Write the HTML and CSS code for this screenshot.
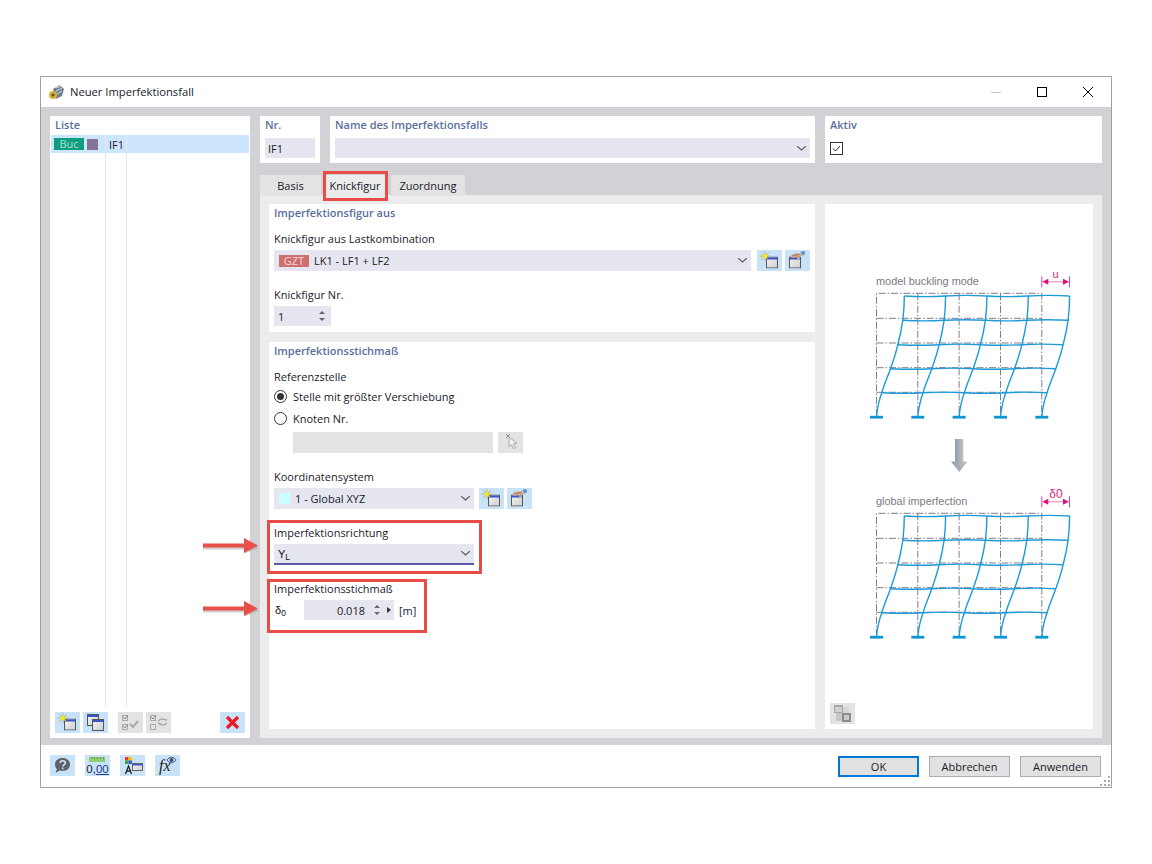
FILE: index.html
```html
<!DOCTYPE html>
<html lang="de">
<head>
<meta charset="utf-8">
<title>Neuer Imperfektionsfall</title>
<link rel="stylesheet" href="styles.css">
</head>
<body>
<svg class="defs" width="0" height="0" aria-hidden="true">
  <defs>
    <linearGradient id="winfill" x1="0" y1="0" x2="1" y2="1"><stop offset="0" stop-color="#f4f4f4"/><stop offset="1" stop-color="#cfcfcf"/></linearGradient>
    <linearGradient id="arrowfill" x1="0" y1="0" x2="1" y2="0"><stop offset="0" stop-color="#8f9bb8"/><stop offset="1" stop-color="#c2c2bc"/></linearGradient>
    <symbol id="i-win" viewBox="0 0 12 12">
      <rect x=".5" y=".5" width="11" height="11" fill="url(#winfill)" stroke="#555"/>
      <rect x="1" y="1" width="10" height="2" fill="#3a55d0"/>
    </symbol>
    <symbol id="i-star" viewBox="0 0 12 12">
      <path d="M6 0v12M0 6h12M1.500 1.500l9 9M10.500 1.500l-9 9" stroke="#a8a890" stroke-width=".9"/>
      <path d="M6 2.500l1 2.500 2.500.2-1.900 1.600.7 2.500L6 7.900 3.700 9.300l.7-2.500L2.500 5.200 5 5z" fill="#ffee00"/>
    </symbol>
    <symbol id="i-new" viewBox="0 0 25 21">
      <use href="#i-win" x="9" y="6.500" width="12" height="12"/>
      <use href="#i-star" x="2.500" y=".5" width="11" height="11"/>
    </symbol>
    <symbol id="i-edit" viewBox="0 0 25 21">
      <use href="#i-win" x="4" y="6.500" width="12" height="12"/>
      <path d="M15.500 1.800l4-.8.500 3.500-3.500 1.200z" fill="#5c8fd0"/>
      <path d="M5 6.500C6.500 4 9.500 3 12 3.300l5 .2.500 2-2.500.7-.5 3.500-2 .5-.5-3.200-3.500.4-1 .5z" fill="#d2ab92"/>
      <path d="M7 6l5-1M10 4.800l5-.3M12.800 7l1.600-.6" stroke="#8d6e5e" stroke-width=".6" fill="none"/>
    </symbol>
    <symbol id="i-copy" viewBox="0 0 25 21">
      <use href="#i-win" x="4" y="2" width="12" height="12"/>
      <use href="#i-win" x="9" y="7" width="12" height="12"/>
    </symbol>
    <symbol id="i-checks" viewBox="0 0 25 21">
      <g fill="none" stroke="#a9a9a9">
        <rect x="4.500" y="3.500" width="5" height="5"/><rect x="4.500" y="12.500" width="5" height="5"/>
        <path d="M5 5l2 2 3-4M5 14l2 2 3-4" stroke="#8a8a8a"/>
        <path d="M12 12l3 3 5-6" stroke-width="2"/>
      </g>
    </symbol>
    <symbol id="i-swap" viewBox="0 0 25 21">
      <g fill="none" stroke="#a9a9a9">
        <rect x="4.500" y="3.500" width="5" height="5"/><rect x="4.500" y="12.500" width="5" height="5"/>
        <path d="M5 5l2 2 3-4" stroke="#8a8a8a"/>
        <path d="M12 9c3-3 5-2 9-1M21 11c-3 3-5 2-9 0" stroke-width="1.500"/>
      </g>
    </symbol>
    <symbol id="i-del" viewBox="0 0 25 21">
      <path d="M7 5l11 11M18 5L7 16" stroke="#ec1c24" stroke-width="3.200" fill="none"/>
    </symbol>
    <symbol id="i-help" viewBox="0 0 25 21">
      <path d="M12.500 3c4.600 0 7.500 2.800 7.500 6.500S17 16 12.500 16c-1 0-2 0-2.800-.4L5.500 18l1.300-4C5.600 12.800 5 11.300 5 9.500 5 5.800 8 3 12.500 3z" fill="#5c636b"/>
      <path d="M10 8c.3-3 5.300-3 5.300 0 0 2-2.500 1.800-2.500 3.500M12.800 12.500v1.700" fill="none" stroke="#d6e6f5" stroke-width="1.500"/>
    </symbol>
    <symbol id="i-ruler" viewBox="0 0 25 21">
      <rect x="4" y="2" width="16" height="5" fill="#8fce74"/>
      <path d="M6.500 2v2M9.500 2v2M12.500 2v2M15.500 2v2M18.500 2v2" stroke="#5e9c48"/>
    </symbol>
    <symbol id="i-colors" viewBox="0 0 25 21">
      <rect x="5" y="2" width="3.500" height="3.500" fill="#e33"/><rect x="8.500" y="2" width="3.500" height="3.500" fill="#eec900"/>
      <rect x="5" y="5.500" width="3.500" height="3.500" fill="#3aa845"/><rect x="8.500" y="5.500" width="3.500" height="3.500" fill="#3b5fd0"/>
      <path d="M5.500 19l3-8 3 8M7 16h3" stroke="#222" stroke-width="1.300" fill="none"/>
      <rect x="12.500" y="8.500" width="10" height="7" fill="url(#winfill)" stroke="#666"/>
      <rect x="13" y="9" width="9" height="1.500" fill="#3a55d0"/>
    </symbol>
    <symbol id="i-eye" viewBox="0 0 25 21">
      <path d="M12 5c2-3.500 7-3.500 9 0-2 3.500-7 3.500-9 0z" fill="#dfe8f2" stroke="#4a5a8c"/>
      <circle cx="16.500" cy="5" r="2" fill="#3a4a86"/>
    </symbol>
    <symbol id="i-pick" viewBox="0 0 25 21">
      <path d="M8 2l4 4M12 2L8 6" stroke="#8a8a8a"/>
      <path d="M11 5l0 10 2.500-2.300 2 4 2-1-2-3.800 3.500-.4z" fill="#f0f0f0" stroke="#aaa"/>
    </symbol>
    <symbol id="i-views" viewBox="0 0 25 21">
      <rect x="4" y="2" width="9" height="8" fill="#a8a8a8"/><rect x="5" y="4" width="7" height="5" fill="#cfcfcf"/>
      <rect x="12" y="10" width="9" height="9" fill="#8c8c8c"/><rect x="14" y="12" width="5" height="5" fill="#c8c8c8"/>
      <rect x="6" y="10" width="6" height="8" fill="#c6c6c6"/><rect x="13" y="4" width="6" height="6" fill="#d6d6d6"/>
    </symbol>
    <path id="chev" d="M0 0l4.500 4L9 0" fill="none" stroke="#555" stroke-width="1.100"/>
    <g id="frame">
      <g fill="none" stroke="#6e6e80" stroke-width=".9" stroke-dasharray="7 2 1.500 2">
        <path d="M0 123V0h165.300v123"/>
        <path d="M41.300 0v123M82.600 0v123M124 0v123"/>
        <path d="M0 25h165.300M0 49.700h165.300M0 74.400h165.300M0 99h165.300"/>
      </g>
      <g fill="none" stroke="#1e9ad8" stroke-width="1.400">
        <path id="col" d="M0 123.700C.8 114 2.500 107 5.300 99.400 8 90 11 84 14 75.400 17 67 19.500 60 21.300 51.400 23.500 43 25 36 26.300 27 27.300 19 27.800 10 27.800 2.700"/>
        <use href="#col" x="41.300"/><use href="#col" x="82.600"/><use href="#col" x="124"/><use href="#col" x="165.300"/>
        <path d="M27.800 2.700q20.700 1.200 41.300 0t41.300 0 41.300 0 41.300 0"/>
        <path d="M26.300 27q20.700 1.200 41.300 0t41.300 0 41.300 0 41.300 0"/>
        <path d="M21.300 51.400q20.700 1.200 41.300 0t41.300 0 41.300 0 41.300 0"/>
        <path d="M14 75.400q20.700 1.200 41.300 0t41.300 0 41.300 0 41.300 0"/>
        <path d="M5.300 99.400q20.700 1.200 41.300 0t41.300 0 41.300 0 41.300 0"/>
      </g>
      <g fill="#0c96d6">
        <rect x="-6.500" y="122.500" width="13" height="2.800"/><rect x="34.800" y="122.500" width="13" height="2.800"/><rect x="76.100" y="122.500" width="13" height="2.800"/><rect x="117.500" y="122.500" width="13" height="2.800"/><rect x="158.800" y="122.500" width="13" height="2.800"/>
      </g>
      <g stroke="#e0107a" fill="#e0107a">
        <path d="M165.300 -17v11M193 -17v11" stroke-width=".8" fill="none"/>
        <path d="M170 -11.500h18" stroke="#f080b8" stroke-width="1"/>
        <path d="M165.800 -11.500l6-3v6zM192.500 -11.500l-6-3v6z" stroke="none"/>
      </g>
    </g>
  </defs>
</svg>

<main class="dialog">
  <header class="titlebar">
    <svg class="appicon" width="18" height="18" viewBox="0 0 18 18">
      <path d="M5 6l7-4 4 4-2 7-6 3z" fill="#6e7d90"/>
      <path d="M8 5l5-2M8 8l6-3M9 11l5-3" stroke="#d8dde4" fill="none"/>
      <circle cx="5" cy="12" r="4" fill="#d8b03c"/><circle cx="5" cy="12" r="1.500" fill="#5c4a10"/>
    </svg>
    <span class="title">Neuer Imperfektionsfall</span>
    <div class="winctl">
      <svg class="wc" width="46" height="12" viewBox="0 0 46 12"><path d="M18 6.500h10" stroke="#c8c8c8"/></svg>
      <svg class="wc" width="46" height="12" viewBox="0 0 46 12"><rect x="18.500" y="1.500" width="9" height="9" fill="none" stroke="#000"/></svg>
      <svg class="wc" width="46" height="12" viewBox="0 0 46 12"><path d="M18 1l10 10M28 1L18 11" stroke="#000" fill="none"/></svg>
    </div>
  </header>

  <div class="workarea">
    <aside class="listpanel">
      <div class="ptitle list-title">Liste</div>
      <div class="listrow">
        <span class="badge buc">Buc</span><span class="swatch"></span><span class="rowname">IF1</span>
      </div>
      <div class="listbody"><span class="rule one"></span><span class="rule two"></span></div>
      <div class="listtools">
        <button class="ib"><svg><use href="#i-new"/></svg></button>
        <button class="ib"><svg><use href="#i-copy"/></svg></button>
        <button class="ib off first-off"><svg><use href="#i-checks"/></svg></button>
        <button class="ib off"><svg><use href="#i-swap"/></svg></button>
        <button class="ib del"><svg><use href="#i-del"/></svg></button>
      </div>
    </aside>

    <section class="mainpane">
      <div class="toprow">
        <div class="topbox nr">
          <div class="ptitle">Nr.</div>
          <div class="inp nrinp">IF1</div>
        </div>
        <div class="topbox name">
          <div class="ptitle">Name des Imperfektionsfalls</div>
          <div class="inp sel"><svg class="chev" width="9" height="5"><use href="#chev"/></svg></div>
        </div>
        <div class="topbox aktiv">
          <div class="ptitle">Aktiv</div>
          <svg class="check" width="13" height="13" viewBox="0 0 13 13"><rect x=".5" y=".5" width="12" height="12" fill="#fff" stroke="#333"/><path d="M3 6.500l2.500 2.500L10 4" fill="none" stroke="#333"/></svg>
        </div>
      </div>

      <nav class="tabs">
        <div class="tab t-basis">Basis</div>
        <div class="tab t-knick active">Knickfigur<span class="hl hl-tab"></span></div>
        <div class="tab t-zuord">Zuordnung</div>
      </nav>

      <div class="tabbody">
        <div class="formcol">
          <div class="panel p1">
            <div class="ptitle">Imperfektionsfigur aus</div>
            <div class="lbl gap10">Knickfigur aus Lastkombination</div>
            <div class="ctlrow">
              <div class="inp sel w477"><span class="badge gzt">GZT</span><span>LK1 - LF1 + LF2</span><svg class="chev" width="9" height="5"><use href="#chev"/></svg></div>
              <button class="ib"><svg><use href="#i-new"/></svg></button>
              <button class="ib"><svg><use href="#i-edit"/></svg></button>
            </div>
            <div class="lbl gap16">Knickfigur Nr.</div>
            <div class="inp spin w57"><span>1</span><span class="updown"><i class="up"></i><i class="dn"></i></span></div>
          </div>

          <div class="panel p2">
            <div class="ptitle">Imperfektionsstichmaß</div>
            <div class="lbl gap10">Referenzstelle</div>
            <div class="radio"><span class="dot on"></span>Stelle mit größter Verschiebung</div>
            <div class="radio"><span class="dot"></span>Knoten Nr.</div>
            <div class="ctlrow indent">
              <div class="inp dis w200"></div>
              <button class="ib off"><svg><use href="#i-pick"/></svg></button>
            </div>
            <div class="lbl gap16">Koordinatensystem</div>
            <div class="ctlrow">
              <div class="inp sel w200"><span class="cs"></span><span>1 - Global XYZ</span><svg class="chev" width="9" height="5"><use href="#chev"/></svg></div>
              <button class="ib"><svg><use href="#i-new"/></svg></button>
              <button class="ib"><svg><use href="#i-edit"/></svg></button>
            </div>
            <div class="field gap16">
              <div class="lbl">Imperfektionsrichtung</div>
              <div class="ctlrow">
                <div class="inp sel w200 focus"><span class="sym">Y<sub>L</sub></span><svg class="chev" width="9" height="5"><use href="#chev"/></svg></div>
              </div>
              <span class="hl hl-dir"></span>
              <svg class="redarrow a1" width="60" height="16" viewBox="0 0 60 16"><path d="M1 7h42V2l14 6-14 6V10H1z" fill="#8a8a8a" opacity=".4" transform="translate(0 1.500)"/><path d="M1 5.500h41V0l14 7.500L42 15V9.500H1z" fill="#e8504a"/></svg>
            </div>
            <div class="field gap16">
              <div class="lbl">Imperfektionsstichmaß</div>
              <div class="ctlrow valrow">
                <span class="sym delta">δ<sub>0</sub></span>
                <div class="inp num"><span class="val">0.018</span><span class="updown"><i class="up"></i><i class="dn"></i></span><i class="rt"></i></div>
                <span class="unit">[m]</span>
              </div>
              <span class="hl hl-val"></span>
              <svg class="redarrow a2" width="60" height="16" viewBox="0 0 60 16"><path d="M1 7h42V2l14 6-14 6V10H1z" fill="#8a8a8a" opacity=".4" transform="translate(0 1.500)"/><path d="M1 5.500h41V0l14 7.500L42 15V9.500H1z" fill="#e8504a"/></svg>
            </div>
          </div>
        </div>

        <div class="preview">
          <svg class="diagram" width="268" height="470" viewBox="825 204 268 470">
            <text x="876" y="285" class="dtext">model buckling mode</text>
            <use href="#frame" x="876.500" y="293.300"/>
            <text x="1055.500" y="278" class="dpink">u</text>
            <rect x="955" y="439" width="8.300" height="23" fill="url(#arrowfill)"/>
            <path d="M951 461.500h16.400l-8.200 10.500z" fill="url(#arrowfill)"/>
            <text x="876" y="505" class="dtext">global imperfection</text>
            <use href="#frame" x="876.500" y="513.300"/>
            <text x="1056" y="498" class="dpink big">δ0</text>
          </svg>
          <button class="ib off viewbtn"><svg><use href="#i-views"/></svg></button>
        </div>
      </div>
    </section>
  </div>

  <footer class="footer">
    <button class="ib"><svg><use href="#i-help"/></svg></button>
    <button class="ib dec"><svg><use href="#i-ruler"/></svg><span class="zero">0,<u>00</u></span></button>
    <button class="ib"><svg><use href="#i-colors"/></svg></button>
    <button class="ib fx"><svg class="fxeye"><use href="#i-eye"/></svg><span>fx</span></button>
    <div class="actions">
      <button class="btn ok">OK</button>
      <button class="btn">Abbrechen</button>
      <button class="btn">Anwenden</button>
    </div>
    <svg class="grip" width="11" height="11" viewBox="0 0 11 11"><path d="M8 0h2v2H8zM4 4h2v2H4zM8 4h2v2H8zM0 8h2v2H0zM4 8h2v2H4zM8 8h2v2H8z" fill="#aaa"/></svg>
  </footer>
</main>
</body>
</html>
```

FILE: styles.css
```css
* { box-sizing: border-box; }
html, body { margin: 0; padding: 0; background: #fff; }
body {
  font-family: "Open Sans", "Noto Sans", "Liberation Sans", sans-serif;
  font-size: 11px;
  color: #1a1a2a;
  width: 1152px;
  height: 864px;
  overflow: hidden;
  padding: 76px 0 0 40px;
}
.defs { position: absolute; }
button { font: inherit; color: inherit; padding: 0; margin: 0; }

.dialog {
  width: 1072px;
  height: 712px;
  border: 1px solid #a0a0a0;
  display: flex;
  flex-direction: column;
  background: #fff;
}
.titlebar { height: 30px; flex: none; display: flex; align-items: center; padding-left: 7px; position: relative; }
.appicon { margin-right: 4px; }
.title { font-size: 11.200px; margin-bottom: 2px; }
.winctl { margin-left: auto; display: flex; }
.wc { display: block; }

.workarea {
  flex: 1;
  background: #d1d1d6;
  padding: 9px 9px 7px 9px;
  display: flex;
  gap: 10px;
  min-height: 0;
}

.ptitle { font-weight: 600; color: #5a6f9c; height: 16px; line-height: 16px; }

.listpanel { width: 200px; background: #fff; display: flex; flex-direction: column; padding: 1px 1px 5px; }
.list-title { padding-left: 4px; height: 18px; }
.listrow { height: 18px; background: #cce5fc; display: flex; align-items: center; padding-left: 3px; flex: none; }
.badge { display: inline-block; text-align: center; height: 12px; line-height: 12px; width: 30px; }
.buc { background: #0f9e80; color: #a8e0d0; }
.swatch { width: 11px; height: 11px; background: #857495; margin-left: 3px; }
.rowname { margin-left: 11px; }
.listbody { flex: 1; position: relative; }
.rule { position: absolute; top: -18px; bottom: 6px; width: 1px; background: #e8e8e8; }
.rule.one { left: 54px; }
.rule.two { left: 75px; }
.listtools { display: flex; gap: 3px; padding-left: 4px; flex: none; }
.first-off { margin-left: 7px; }
.del { margin-left: auto; margin-right: 4px; }

.ib { width: 25px; height: 21px; background: #c8e2f8; border: 0; display: block; flex: none; }
.ib svg { width: 25px; height: 21px; display: block; }
.ib.off { background: #e3e3e3; }

.mainpane { flex: 1; display: flex; flex-direction: column; min-width: 0; }
.toprow { display: flex; gap: 10px; height: 47px; flex: none; }
.topbox { background: #fff; padding: 1px 5px; }
.nr { width: 60px; }
.name { width: 485px; }
.aktiv { flex: 1; }
.inp {
  background: #e6e6f0;
  height: 20px;
  display: flex;
  align-items: center;
  padding: 0 4px;
}
.topbox .inp { margin-top: 5px; }
.nrinp { padding-left: 3px; }
.check { display: block; margin: 9px 0 0 0; }
.chev { margin-left: auto; display: block; }
.sel { height: 21px; }
.topbox .sel { height: 20px; }

.tabs { display: flex; height: 21px; margin-top: 12px; flex: none; position: relative; }
.tab { height: 21px; text-align: center; line-height: 21px; background: #e3e3e3; position: relative; }
.t-basis { width: 61px; }
.t-knick { width: 64px; margin-left: 2px; }
.t-zuord { width: 74px; margin-left: 4px; }
.tab.active { background: #ececec; }

.hl { position: absolute; border: 3px solid #e74c47; pointer-events: none; }
.hl-tab { left: 0; right: -1px; top: -4px; bottom: -5px; }
.hl-dir { left: -7px; right: -8px; top: -5px; bottom: -9px; }
.hl-val { left: -7px; right: 47px; top: -2px; bottom: -13px; }

.tabbody {
  flex: 1;
  min-height: 0;
  margin-top: -1px;
  background: #ececec;
  padding: 9px;
  display: flex;
  gap: 10px;
}
.formcol { width: 546px; display: flex; flex-direction: column; gap: 10px; }
.panel { background: #fff; padding: 1px 5px; }
.p1 { height: 128px; flex: none; }
.p2 { flex: 1; }
.lbl { height: 16px; line-height: 16px; }
.gap10 { margin-top: 10px; }
.gap16 { margin-top: 16px; }
.ctlrow { display: flex; gap: 3px; margin-top: 3px; }
.lbl + .inp { margin-top: 3px; }
.w477 { width: 477px; margin-right: 3px; }
.w200 { width: 200px; }
.w57 { width: 57px; }
.gzt { background: #cd6f6f; color: #f6dada; margin: 0 5px 0 1px; }
.updown { display: flex; flex-direction: column; gap: 4px; margin-left: auto; }
.up, .dn, .rt { display: block; width: 0; height: 0; border-style: solid; }
.up { border-width: 0 3px 3px; border-color: transparent transparent #666; }
.dn { border-width: 3px 3px 0; border-color: #666 transparent transparent; }
.spin { padding-right: 6px; padding-left: 4px; }

.radio { height: 22px; display: flex; align-items: center; }
.dot { width: 13px; height: 13px; border: 1px solid #333; border-radius: 50%; margin-right: 6px; position: relative; background: #fff; }
.dot.on::after { content: ""; position: absolute; inset: 2px; background: #333; border-radius: 50%; }
.indent { margin: 3px 0 0 19px; gap: 5px; }
.inp.dis { height: 21px; background: #e3e3e3; }
.cs { width: 11px; height: 11px; background: #ccffff; margin: 0 5px 0 1px; }
.ctlrow > .w200.sel + .ib { margin-left: 2px; }

.field { position: relative; width: 200px; }
.focus { border-bottom: 2px solid #5b5ba8; }
.sym { font-family: "Liberation Sans", sans-serif; font-size: 11px; color: #111; }
.sym sub { font-size: 8.500px; vertical-align: -2px; line-height: 0; }
.valrow { gap: 0; align-items: center; }
.delta { width: 30px; padding-left: 1px; font-size: 11px; }
.num { width: 90px; padding-right: 3px; }
.val { margin-left: auto; margin-right: 9px; }
.num .updown { margin-left: 0; }
.rt { border-width: 3px 0 3px 4px; border-color: transparent transparent transparent #333; margin-left: 7px; }
.unit { margin-left: 5px; }
.redarrow { position: absolute; left: -72px; display: block; }
.a1 { top: 13px; }
.a2 { top: 20px; }

.preview { flex: 1; background: #fff; display: flex; flex-direction: column; }
.diagram { display: block; flex: none; }
.dtext { font-family: "Liberation Sans", sans-serif; font-size: 10.900px; fill: #7a7a82; }
.dpink { font-family: "Liberation Sans", sans-serif; font-size: 11px; fill: #d81a78; text-anchor: middle; }
.dpink.big { font-size: 12px; }
.viewbtn { margin: auto 0 5px 5px; }

.footer { height: 42px; flex: none; display: flex; align-items: flex-start; padding: 10px 0 0 9px; gap: 10px; position: relative; }
.dec { position: relative; }
.zero { position: absolute; left: 0; right: 0; top: 8px; text-align: center; font-family: "Liberation Sans", sans-serif; font-size: 11.500px; line-height: 12px; color: #223; }
.zero u { color: #2a3a90; }
.fx { position: relative; }
.ib .fxeye { position: absolute; left: 0; top: 0; }
.fx span { font-family: "Liberation Serif", serif; font-style: italic; font-size: 16px; line-height: 21px; display: block; text-align: left; padding-left: 4px; color: #222; position: relative; }
.actions { margin-left: auto; display: flex; gap: 10px; padding: 1px 10px 0 0; }
.btn { width: 81px; height: 21px; background: #e1e1e1; border: 1px solid #adadad; }
.btn.ok { border: 2px solid #0078d7; }
.grip { position: absolute; right: 0; bottom: 0; }
```
